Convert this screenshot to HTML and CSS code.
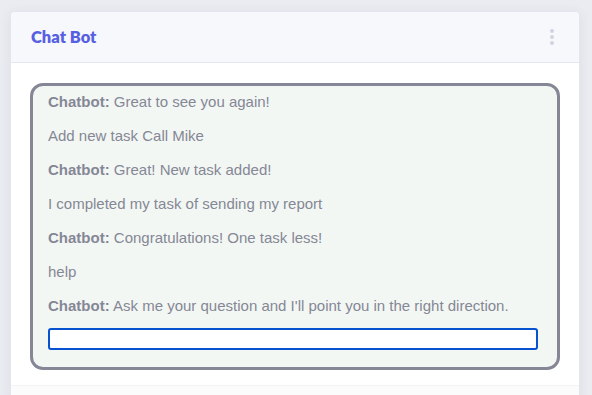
FILE: index.html
```html
<!DOCTYPE html>
<html lang="en">
 <head>
  <title>Chat Bot</title>
  <link rel="stylesheet" href="styles.css">
 </head>
 <body>
  <div class="card">
   <div class="card-header">
    <h6 class="card-title">Chat Bot</h6>
    <span class="menu-dots"><i></i><i></i><i></i></span>
   </div>
   <div class="card-body">
    <div class="chat-box">
     <p><b>Chatbot:</b> Great to see you again!</p>
     <p>Add new task Call Mike</p>
     <p><b>Chatbot:</b> Great! New task added!</p>
     <p>I completed my task of sending my report</p>
     <p><b>Chatbot:</b> Congratulations! One task less!</p>
     <p>help</p>
     <p class="last"><b>Chatbot:</b> Ask me your question and I'll point you in the right direction.</p>
     <input type="text" class="chat-input" />
    </div>
   </div>
   <div class="card-footer"></div>
  </div>
 </body>
</html>
```

FILE: styles.css
```css
body {
    margin: 0;
    background: #ebecf1;
    font-family: "Liberation Sans", Arial, sans-serif;
}

.card {
    margin: 11px 12px 0 10px;
    background: white;
    border-radius: 5px 5px 0 0;
    border: 1px solid #e3e6f0;
    border-bottom: none;
    box-shadow: 0 2px 12px rgba(58, 59, 69, 0.08);
    overflow: hidden;
}

.card-header {
    display: flex;
    justify-content: space-between;
    align-items: center;
    height: 50px;
    padding: 0 25px 0 20px;
    background: #f7f8fc;
    border-bottom: 1px solid #e3e6f0;
}

.card-title {
    margin: 0;
    font-family: Lato, "Open Sans", sans-serif;
    font-weight: 800;
    font-size: 16.5px;
    color: #5660e2;
}

.menu-dots {
    display: flex;
    flex-direction: column;
    gap: 2px;
}

.menu-dots i {
    width: 4px;
    height: 4px;
    border-radius: 50%;
    background: #d1d3e2;
}

.card-body {
    padding: 20px 19px 15px 19px;
}

.chat-box {
    border: 3px solid #858796;
    border-radius: 13px;
    background: #f3f7f3;
    padding: 6px 19px 17px 15px;
    color: #858796;
    font-size: 15px;
    line-height: 20px;
}

.chat-box p {
    margin: 0 0 14px;
}

.chat-box p.last {
    margin-bottom: 12px;
}

.chat-box b {
    font-weight: bold;
}

.chat-input {
    display: block;
    box-sizing: border-box;
    width: 100%;
    height: 22px;
    margin: 0;
    border: 2px solid #0753cf;
    border-radius: 3px;
    background: white;
    outline: none;
}

.card-footer {
    height: 20px;
    background: #fbfbfc;
    border-top: 1px solid #f4f4f6;
}
```
